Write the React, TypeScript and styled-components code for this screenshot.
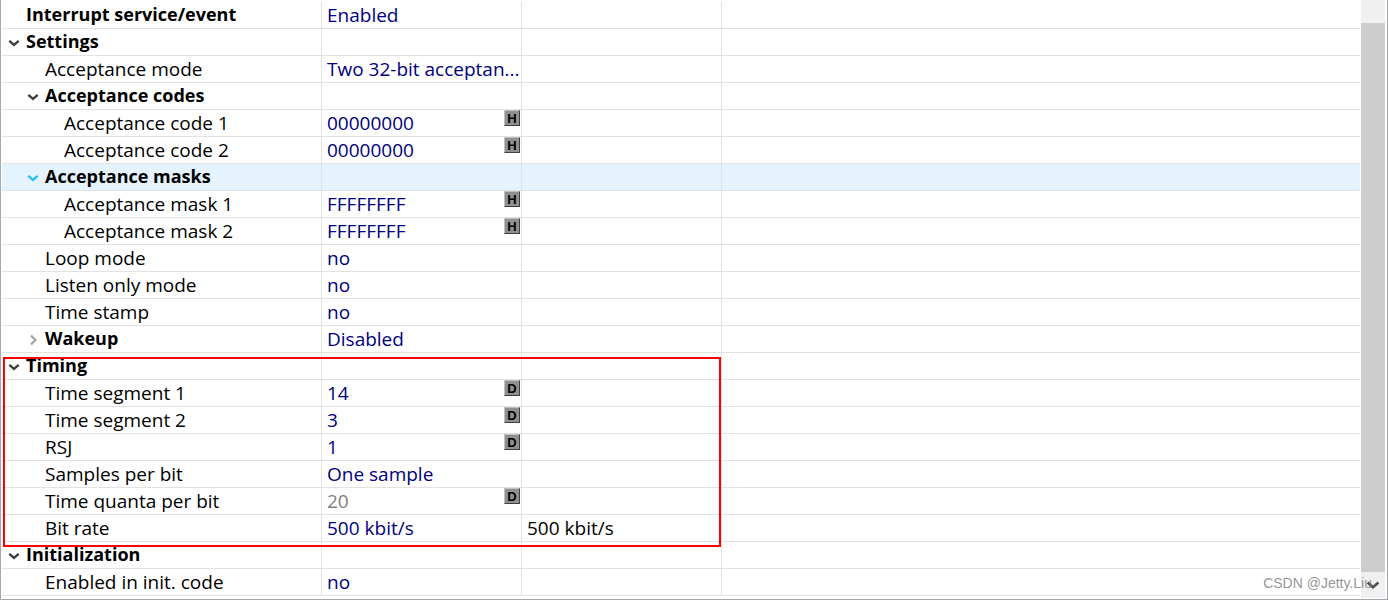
import React, { useState } from "react";
import styled, { createGlobalStyle } from "styled-components";

const GlobalStyle = createGlobalStyle`
  *, *::before, *::after { box-sizing: border-box; }
  body { margin: 0; background: #fff; }
`;

const Panel = styled.main`
  position: relative;
  display: flex;
  gap: 1px;
  padding: 0 2px 0 1px;
  border: solid #a6a6ae;
  border-width: 0 1px 1px;
  background: #fff;
  overflow: hidden;
`;

const TableArea = styled.div`
  flex: 1;
  min-width: 0;
  padding: 2px 0 3px;
`;

const Grid = styled.table`
  width: 100%;
  table-layout: fixed;
  border-collapse: separate;
  border-spacing: 0;
  font-family: "Open Sans", "Noto Sans", sans-serif;
  font-size: 19px;
  line-height: 26px;
  color: #000;
`;

const NameColumn = styled.col`
  width: 320px;
`;

const ValueColumn = styled.col`
  width: 200px;
`;

const Group = styled.tbody`
  position: relative;
`;

const Row = styled.tr<{ $selected?: boolean }>`
  background: ${(p) => (p.$selected ? "#e5f3ff" : "transparent")};
`;

const cellLines = `
  height: 27px;
  border: solid #e2e2e2;
  border-width: 0 1px 1px 0;
  white-space: nowrap;
`;

const NameCell = styled.th<{ $level: number; $bold?: boolean }>`
  ${cellLines}
  padding: 0 0 0 ${(p) => 5 + p.$level * 19}px;
  text-align: left;
  font-size: ${(p) => (p.$bold ? 18 : 19)}px;
  font-weight: ${(p) => (p.$bold ? 700 : 400)};
`;

const NameContent = styled.div<{ $bold?: boolean }>`
  display: flex;
  align-items: center;
  height: 26px;
  padding-bottom: ${(p) => (p.$bold ? 2 : 0)}px;
`;

const ToggleSlot = styled.span`
  display: flex;
  flex: none;
  width: 19px;
`;

const Toggle = styled.button<{ $tone: string }>`
  display: flex;
  width: 14px;
  height: 14px;
  margin-top: 4px;
  padding: 0;
  border: 0;
  background: none;
  color: ${(p) => p.$tone};
`;

const ValueCell = styled.td<{ $tone?: string }>`
  ${cellLines}
  position: relative;
  padding: 0 0 0 5px;
  color: ${(p) => p.$tone ?? "#000080"};
`;

const FillCell = styled.td`
  ${cellLines}
  border-right: 0;
`;

const Radix = styled.button`
  position: absolute;
  top: 0;
  right: 1px;
  width: 16px;
  height: 16px;
  padding: 0;
  border: 1px solid;
  border-color: #c0c0c0 #404040 #404040 #c0c0c0;
  background: #909090;
  color: #000;
  font: bold 13px/16px "Liberation Sans", sans-serif;
  text-align: center;
`;

const Outline = styled.span`
  position: absolute;
  z-index: 1;
  top: 4px;
  bottom: -5px;
  left: 1px;
  width: 718px;
  border: 2px solid #ff0000;
  pointer-events: none;
`;

const Scrollbar = styled.div`
  display: flex;
  flex-direction: column;
  width: 24px;
  margin-bottom: 1px;
  padding-top: 23px;
  background: #f0f0f0;
`;

const Thumb = styled.div`
  flex: 1;
  background: #cdcdcd;
`;

const ScrollDown = styled.button`
  display: flex;
  align-items: center;
  justify-content: center;
  height: 26px;
  padding: 0;
  border: 0;
  background: #f0f0f0;
  color: #505050;
`;

const Watermark = styled.span`
  position: absolute;
  right: 15px;
  bottom: 6px;
  font: 14px/20px "Liberation Sans", sans-serif;
  color: rgba(120, 120, 120, 0.8);
  pointer-events: none;
`;

const Chevron = ({ open, size = 14 }: { open: boolean; size?: number }) => (
  <svg width={size} height={size} viewBox="0 0 14 14" fill="none" stroke="currentColor" strokeWidth="2.4" aria-hidden="true">
    <path d={open ? "M2.3 4.8 7 9l4.7-4.2" : "M5 2.5 9.4 7 5 11.5"} />
  </svg>
);

type Item = {
  name: string;
  level: number;
  bold?: boolean;
  open?: boolean;
  value?: string;
  radix?: "H" | "D";
  tone?: string;
  detail?: string;
};

const groups: { outlined?: boolean; items: Item[] }[] = [
  {
    items: [
      { name: "Interrupt service/event", level: 0, bold: true, value: "Enabled" },
      { name: "Settings", level: 0, bold: true, open: true },
      { name: "Acceptance mode", level: 1, value: "Two 32-bit acceptan..." },
      { name: "Acceptance codes", level: 1, bold: true, open: true },
      { name: "Acceptance code 1", level: 2, value: "00000000", radix: "H" },
      { name: "Acceptance code 2", level: 2, value: "00000000", radix: "H" },
      { name: "Acceptance masks", level: 1, bold: true, open: true },
      { name: "Acceptance mask 1", level: 2, value: "FFFFFFFF", radix: "H" },
      { name: "Acceptance mask 2", level: 2, value: "FFFFFFFF", radix: "H" },
      { name: "Loop mode", level: 1, value: "no" },
      { name: "Listen only mode", level: 1, value: "no" },
      { name: "Time stamp", level: 1, value: "no" },
      { name: "Wakeup", level: 1, bold: true, open: false, value: "Disabled" },
    ],
  },
  {
    outlined: true,
    items: [
      { name: "Timing", level: 0, bold: true, open: true },
      { name: "Time segment 1", level: 1, value: "14", radix: "D" },
      { name: "Time segment 2", level: 1, value: "3", radix: "D" },
      { name: "RSJ", level: 1, value: "1", radix: "D" },
      { name: "Samples per bit", level: 1, value: "One sample" },
      { name: "Time quanta per bit", level: 1, value: "20", radix: "D", tone: "#808080" },
      { name: "Bit rate", level: 1, value: "500 kbit/s", detail: "500 kbit/s" },
    ],
  },
  {
    items: [
      { name: "Initialization", level: 0, bold: true, open: true },
      { name: "Enabled in init. code", level: 1, value: "no" },
    ],
  },
];

export default function App() {
  const [selected, setSelected] = useState("Acceptance masks");

  return (
    <>
      <GlobalStyle />
      <Panel>
        <TableArea>
          <Grid>
            <colgroup>
              <NameColumn />
              <ValueColumn />
              <ValueColumn />
              <col />
            </colgroup>
            {groups.map((group, index) => (
              <Group key={index}>
                {group.items.map((item, row) => {
                  const active = item.name === selected;
                  const tone = active ? "#26c0f5" : item.open ? "#404040" : "#a6a6a6";
                  return (
                    <Row key={item.name} $selected={active} onClick={() => setSelected(item.name)}>
                      <NameCell scope="row" $level={item.level} $bold={item.bold}>
                        <NameContent $bold={item.bold}>
                          <ToggleSlot>
                            {item.open !== undefined && (
                              <Toggle type="button" $tone={tone} aria-label={item.name} aria-expanded={item.open}>
                                <Chevron open={item.open} />
                              </Toggle>
                            )}
                          </ToggleSlot>
                          {item.name}
                        </NameContent>
                        {group.outlined && row === 0 && <Outline />}
                      </NameCell>
                      <ValueCell $tone={item.tone}>
                        {item.value}
                        {item.radix && <Radix type="button">{item.radix}</Radix>}
                      </ValueCell>
                      <ValueCell $tone="#000">{item.detail}</ValueCell>
                      <FillCell />
                    </Row>
                  );
                })}
              </Group>
            ))}
          </Grid>
        </TableArea>
        <Scrollbar>
          <Thumb />
          <ScrollDown type="button" aria-label="Scroll down">
            <Chevron open size={16} />
          </ScrollDown>
        </Scrollbar>
        <Watermark>CSDN @Jetty.Liu</Watermark>
      </Panel>
    </>
  );
}
